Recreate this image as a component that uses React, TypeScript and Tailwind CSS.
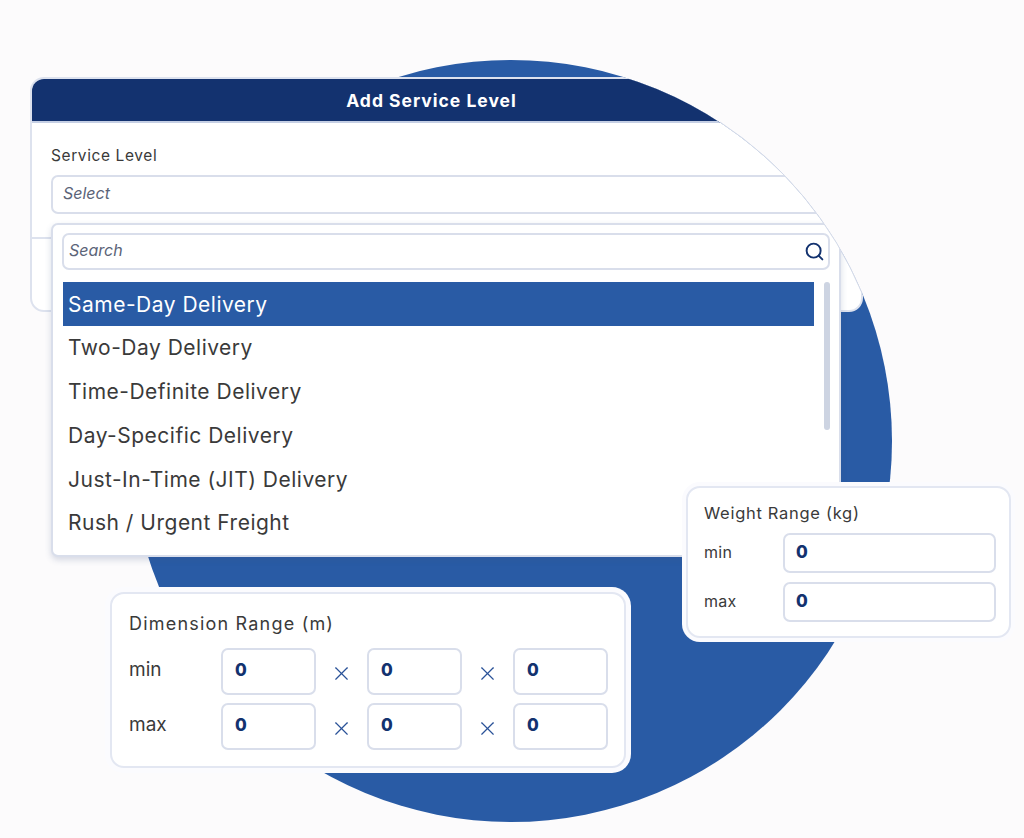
import { Search, X } from "lucide-react"

const options = [
  "Same-Day Delivery",
  "Two-Day Delivery",
  "Time-Definite Delivery",
  "Day-Specific Delivery",
  "Just-In-Time (JIT) Delivery",
  "Rush / Urgent Freight",
]

function ZeroInput({ className }: { className: string }) {
  return (
    <div className={`flex items-center rounded-[7px] border-2 border-[#d9deeb] bg-white font-extrabold text-[17px] text-[#13326f] ${className}`}>
      0
    </div>
  )
}

function Times() {
  return (
    <div className="flex w-[51px] justify-center pt-[3px]">
      <X className="h-[23px] w-[23px] text-[#2a5298]" strokeWidth={1.2} />
    </div>
  )
}

export default function App() {
  return (
    <div className="relative h-[838px] w-[1024px] overflow-hidden bg-[#fcfbfc] font-['Inter',sans-serif] text-[#3a3a3a]">
      {/* Blue circle */}
      <div className="absolute left-[130px] top-[60px] h-[762px] w-[762px] rounded-full bg-[#295ba5]"></div>

      {/* Dialog and dropdown, cut by the circle on the right */}
      <div className="absolute inset-0 [clip-path:path('M0,0H511V60A381,381,0,0,1,892,441V838H0Z')]">
        <div className="absolute left-[30px] top-[77px] h-[235px] w-[833px] overflow-hidden rounded-[14px] border-2 border-[#dde2ee] bg-white">
          <div className="flex h-[44px] items-center justify-center border-b-2 border-[#c5cfe4] bg-[#13326f] pr-[30px] pt-[3px] text-[17.5px] font-bold tracking-[1px] text-white">
            Add Service Level
          </div>
          <div className="px-[19px] pt-[23px]">
            <div className="text-[15.5px] leading-[20px] tracking-[0.6px]">Service Level</div>
            <div className="mt-[9px] flex h-[39px] items-center rounded-[7px] border-2 border-[#d9deeb] pb-[4px] pl-[10px] text-[16px] italic text-[#5b6478]">
              Select
            </div>
          </div>
          <div className="mt-[23px] border-t-2 border-[#dde2ee]"></div>
        </div>

        <div className="absolute left-[51px] top-[223px] h-[334px] w-[790px] rounded-[7px] border-2 border-[#d9deeb] bg-white p-[9px] pt-[8px] shadow-[0_3px_6px_rgba(60,80,130,0.2)]">
          <div className="flex h-[37px] items-center justify-between rounded-[7px] border-2 border-[#d9deeb] pl-[5px] pr-[3px] text-[16px] italic text-[#5b6478]">
            <span className="pb-[4px]">Search</span>
            <Search className="h-[21px] w-[21px] text-[#13326f]" strokeWidth={2.2} />
          </div>
          <div className="mt-[12px] flex gap-[10px] pl-[1px]">
            <div className="w-[751px]">
              {options.map((o, i) => (
                <div
                  key={o}
                  className={`flex items-center pl-[5px] text-[21px] tracking-[0.5px] ${i === 0 ? "h-[44px] bg-[#295ba5] pt-[1px] text-white" : "h-[43.8px]"}`}
                >
                  {o}
                </div>
              ))}
            </div>
            <div className="h-[148px] w-[6px] rounded-full bg-[#cdd4e2]"></div>
          </div>
        </div>
      </div>

      {/* Thin line along the cut edge */}
      <svg className="absolute left-0 top-0 h-[838px] w-[1024px]" viewBox="0 0 1024 838" fill="none">
        <path d="M720 122A381 381 0 0 1 862 293" stroke="#d5dbe9" strokeWidth="1" />
      </svg>

      {/* Weight Range */}
      <div className="absolute left-[686px] top-[486px] h-[152px] w-[325px] rounded-[14px] border-2 border-[#e3e7f2] bg-white pl-[16px] pt-[15px] shadow-[0_0_0_4px_#fbfbfe]">
        <div className="text-[16.5px] leading-[20px] tracking-[0.7px]">Weight Range (kg)</div>
        <div className="mt-[10px] flex flex-col gap-[9px]">
          {["min", "max"].map((l) => (
            <div key={l} className="flex items-center">
              <div className="w-[79px] pb-[2px] text-[16px] tracking-[0.3px]">{l}</div>
              <ZeroInput className="h-[40px] w-[213px] pl-[11px]" />
            </div>
          ))}
        </div>
      </div>

      {/* Dimension Range */}
      <div className="absolute left-[110px] top-[592px] h-[176px] w-[516px] rounded-[14px] border-2 border-[#e3e7f2] bg-white pl-[17px] pt-[18px] shadow-[0_0_0_5px_#fbfbfe]">
        <div className="text-[18px] leading-[24px] tracking-[1.2px]">Dimension Range (m)</div>
        <div className="mt-[12px] flex flex-col gap-[8px]">
          {["min", "max"].map((l) => (
            <div key={l} className="flex items-center">
              <div className="w-[92px] pb-[2px] text-[19px]">{l}</div>
              <ZeroInput className="h-[47px] w-[95px] pb-[2px] pl-[12px]" />
              <Times />
              <ZeroInput className="h-[47px] w-[95px] pb-[2px] pl-[12px]" />
              <Times />
              <ZeroInput className="h-[47px] w-[95px] pb-[2px] pl-[12px]" />
            </div>
          ))}
        </div>
      </div>
    </div>
  )
}
